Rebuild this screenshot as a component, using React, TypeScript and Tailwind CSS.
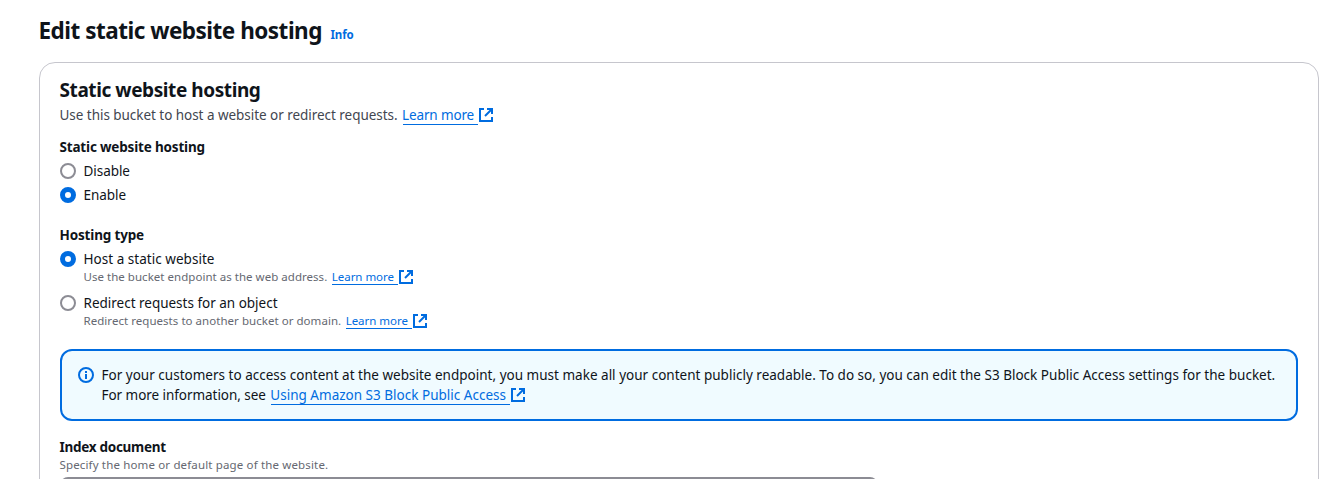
import type { ReactNode } from "react";

function ExternalIcon() {
  return (
    <svg viewBox="0 0 16 16" className="inline-block h-4 w-4 shrink-0" fill="none" stroke="#006ce0" strokeWidth="2">
      <path d="M6 2H2v12h12v-4" />
      <path d="M9 2h5v5" />
      <path d="M7 9l7-7" />
    </svg>
  );
}

function InfoIcon() {
  return (
    <svg viewBox="0 0 16 16" className="mt-0.5 h-4 w-4 shrink-0" fill="none" stroke="#006ce0" strokeWidth="2">
      <circle cx="8" cy="8" r="7" />
      <path d="M8 7v5M8 4v2" />
    </svg>
  );
}

function ExternalLink({ children, small = false }: { children: ReactNode; small?: boolean }) {
  return (
    <a className="flex items-start text-[#006ce0]">
      <span className={small ? "h-4 border-b border-[#006ce0] pr-1" : "h-5 border-b border-[#006ce0] pr-1"}>{children}</span>
      <span className={small ? "flex h-4 items-center" : "flex h-5 items-center"}>
        <ExternalIcon />
      </span>
    </a>
  );
}

function Radio({ checked = false, label, children }: { checked?: boolean; label: ReactNode; children?: ReactNode }) {
  return (
    <div className="flex gap-2">
      <span
        className={
          checked
            ? "mt-0.5 h-4 w-4 shrink-0 rounded-full border-5 border-[#006ce0] bg-white"
            : "mt-0.5 h-4 w-4 shrink-0 rounded-full border-2 border-[#8c8c94] bg-white"
        }
      />
      <div>
        <div>{label}</div>
        {children}
      </div>
    </div>
  );
}

export default function App() {
  return (
    <main className="h-[479px] overflow-hidden bg-white pt-4 pr-0.5 pl-[39px] -indent-[0.5px] font-['Noto_Sans',sans-serif] text-[13.5px] leading-5 whitespace-nowrap text-[#0f141a]">
      <header className="flex h-[30px] items-baseline gap-[9px]">
        <h1 className="text-[22.5px] leading-[30px] font-bold tracking-[-0.5px]">Edit static website hosting</h1>
        <a className="text-[11.5px] font-bold tracking-[-0.1px] text-[#006ce0]">Info</a>
      </header>

      <section className="mt-4 h-[460px] rounded-2xl border border-[#c6c6cd] px-5 pt-[15px]">
        <h2 className="text-[19px] leading-6 font-bold tracking-[-0.42px]">Static website hosting</h2>
        <div className="mt-[3px] flex gap-[5px] text-[#424650]">
          <span className="tracking-[-0.04px]">Use this bucket to host a website or redirect requests.</span>
          <ExternalLink>
            <span className="tracking-[-0.14px]">Learn more</span>
          </ExternalLink>
        </div>

        <div className="mt-3 font-bold tracking-[-0.18px]">Static website hosting</div>
        <div className="mt-1 flex flex-col gap-1 tracking-[-0.05px]">
          <Radio label="Disable" />
          <Radio checked label="Enable" />
        </div>

        <div className="mt-5 font-bold tracking-[-0.16px]">Hosting type</div>
        <div className="mt-1 flex flex-col gap-2">
          <Radio checked label={<span className="tracking-[0.03px]">Host a static website</span>}>
            <div className="flex gap-[5px] text-[11.5px] leading-4 text-[#656871]">
              <span className="tracking-[0.03px]">Use the bucket endpoint as the web address.</span>
              <ExternalLink small>
                <span className="tracking-[-0.03px]">Learn more</span>
              </ExternalLink>
            </div>
          </Radio>
          <Radio label={<span className="tracking-[-0.01px]">Redirect requests for an object</span>}>
            <div className="flex gap-[5px] text-[11.5px] leading-4 text-[#656871]">
              <span className="tracking-[0.04px]">Redirect requests to another bucket or domain.</span>
              <ExternalLink small>
                <span className="tracking-[-0.03px]">Learn more</span>
              </ExternalLink>
            </div>
          </Radio>
        </div>

        <div className="mt-5 flex h-[72px] gap-2 rounded-xl border-2 border-[#006ce0] bg-[#f0fbff] px-4 pt-[14px]">
          <InfoIcon />
          <div>
            <div className="tracking-[0.01px]">
              For your customers to access content at the website endpoint, you must make all your content publicly readable. To do so, you can edit the S3 Block Public Access settings for the bucket.
            </div>
            <div className="flex gap-[5px]">
              <span className="tracking-[-0.05px]">For more information, see</span>
              <ExternalLink>
                <span className="tracking-[0.01px]">Using Amazon S3 Block Public Access</span>
              </ExternalLink>
            </div>
          </div>
        </div>

        <div className="mt-4 font-bold tracking-[-0.28px]">Index document</div>
        <div className="text-[11.5px] leading-4 tracking-[0.15px] text-[#656871]">Specify the home or default page of the website.</div>
        <div className="mt-1 h-8 w-[818px] rounded-lg border-2 border-[#8c8c94] bg-white" />
      </section>
    </main>
  );
}
